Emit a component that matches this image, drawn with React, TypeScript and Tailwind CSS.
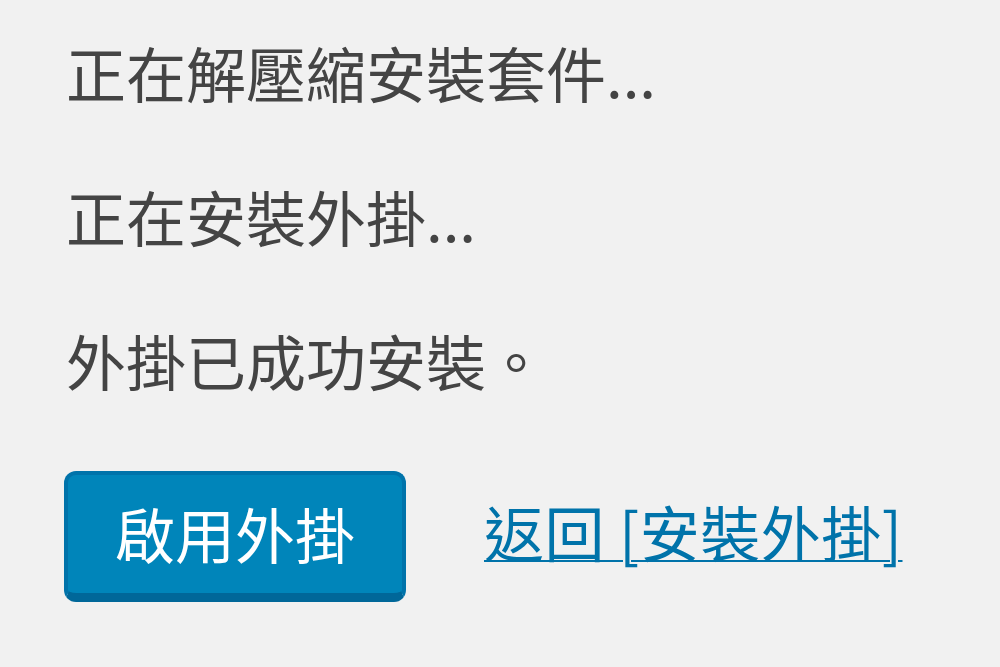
export default function App() {
  return (
    <div
      className="min-h-screen bg-[#f1f1f1] pl-[66px] pt-[30px] text-[#444]"
      style={{ fontFamily: '"Noto Sans CJK TC", "Noto Sans", sans-serif' }}
    >
      <div className="flex flex-col gap-[60px]">
        <p className="text-[60px] leading-[84px]">正在解壓縮安裝套件...</p>
        <p className="text-[60px] leading-[84px]">正在安裝外掛...</p>
        <p className="text-[60px] leading-[84px]">外掛已成功安裝。</p>
        <div className="flex items-center gap-[78px] pt-[9px]">
          <a
            href="#"
            className="-ml-[2px] inline-flex h-[131px] items-center rounded-[12px] border-[4px] border-b-[9px] border-[#0073aa] border-b-[#006799] bg-[#0085ba] px-[47px] pb-[2px] text-[60px] text-white"
          >
            啟用外掛
          </a>
          <a
            href="#"
            className="mb-[12px] text-[60px] leading-[84px] tracking-[0.5px] text-[#0073aa] underline decoration-[2px] underline-offset-[3px]"
          >
            返回 [安裝外掛]
          </a>
        </div>
      </div>
    </div>
  );
}
